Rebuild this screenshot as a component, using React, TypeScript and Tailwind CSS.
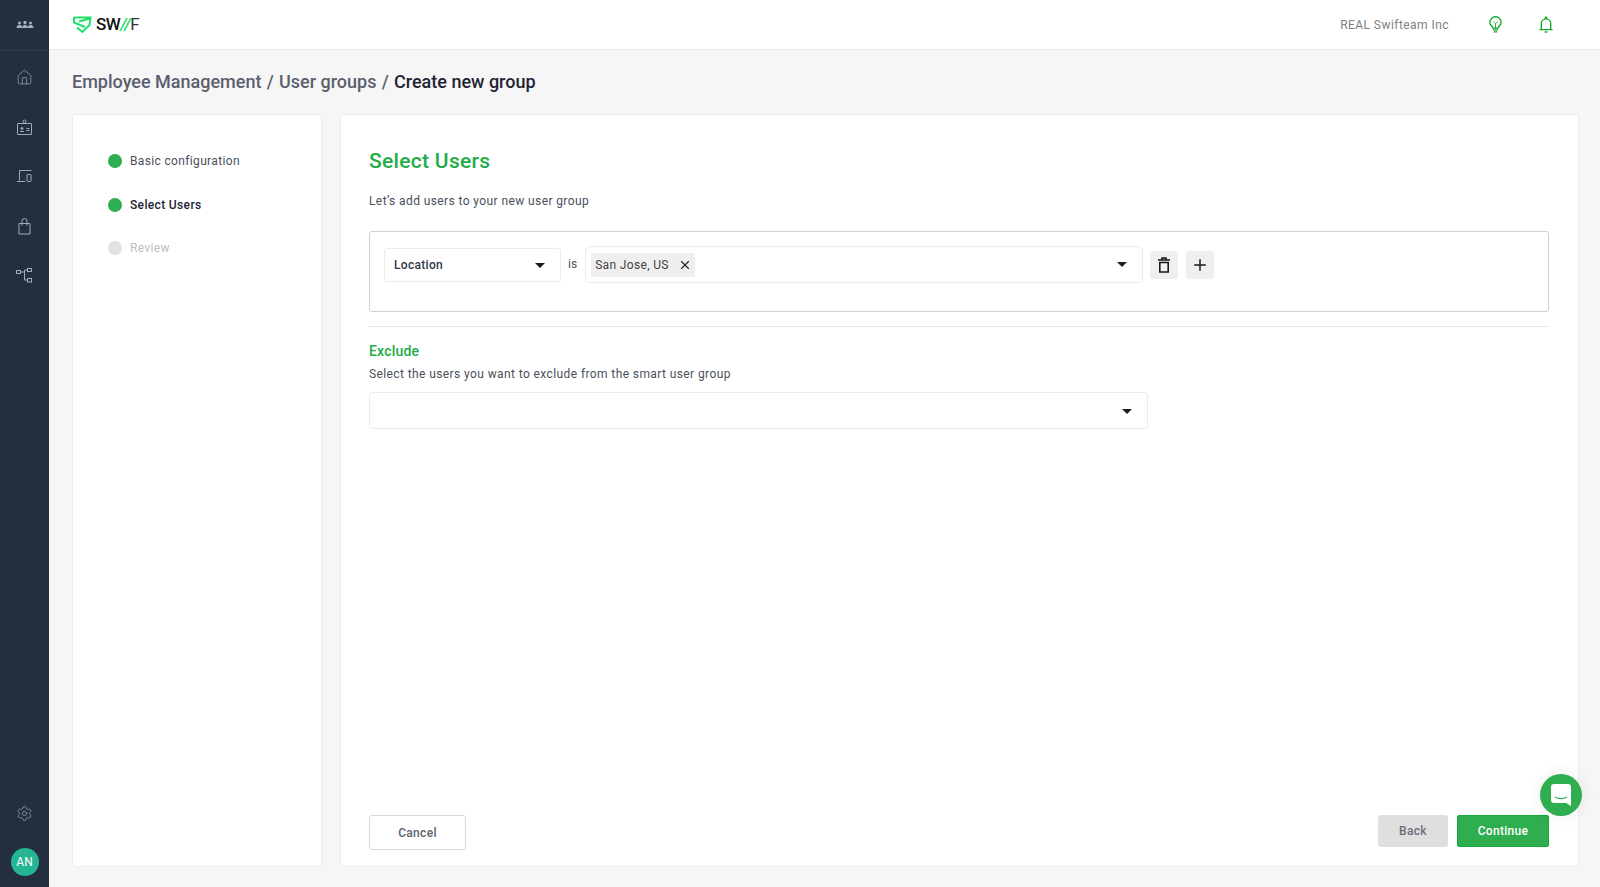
import { Plus, Settings, Home, X } from "lucide-react";

function Caret({ className = "" }: { className?: string }) {
  return <span className={`w-0 h-0 border-x-[5px] border-x-transparent border-t-[5px] border-t-[#1c1c1c] ${className}`} />;
}

function TeamIcon() {
  return (
    <svg width="20" height="20" viewBox="0 0 20 20" fill="#aab0b8">
      <circle cx="4.500" cy="8" r="1.500" />
      <circle cx="10" cy="7.500" r="1.700" />
      <circle cx="15.500" cy="8" r="1.500" />
      <path d="M1.500 13c0-2 1-3 3-3s3 1 3 3zM7.500 13c0-2.200 1-3.300 2.500-3.300s2.500 1.100 2.500 3.300zM12.500 13c0-2 1-3 3-3s3 1 3 3z" />
    </svg>
  );
}

function BadgeIcon() {
  return (
    <svg width="17" height="17" viewBox="0 0 17 17" fill="none" stroke="#a4aab2" strokeWidth="1">
      <rect x="1.500" y="4.500" width="14" height="11" rx="0.500" />
      <circle cx="8.500" cy="2.500" r="1.500" />
      <path d="M4 12.500h4M10.500 9.500h3M10.500 11.500h3" />
      <circle cx="6" cy="9.500" r="1" fill="#a4aab2" />
    </svg>
  );
}

function DevicesIcon() {
  return (
    <svg width="17" height="17" viewBox="0 0 17 17" fill="none" stroke="#a4aab2" strokeWidth="1">
      <path d="M3.500 12.500V2.500h12M1 13.500h8" />
      <rect x="11" y="6.500" width="4" height="7" rx="0.500" />
    </svg>
  );
}

function BagIcon() {
  return (
    <svg width="17" height="17" viewBox="0 0 17 17" fill="none" stroke="#a4aab2" strokeWidth="1">
      <path d="M3 5.500h11v10.500H3z" />
      <path d="M6 7.500V3a2.500 2.500 0 0 1 5 0v4.500" />
    </svg>
  );
}

function TreeIcon() {
  return (
    <svg width="17" height="17" viewBox="0 0 17 17" fill="none" stroke="#a4aab2" strokeWidth="1">
      <rect x="0.500" y="3.500" width="4" height="3" />
      <rect x="11.500" y="1.500" width="4" height="3" />
      <rect x="11.500" y="11.500" width="4" height="3.500" />
      <path d="M4.500 5h4M8.500 3h3M8.500 3v10h3" />
    </svg>
  );
}

function BulbIcon() {
  return (
    <svg width="13" height="18" viewBox="0 0 15 20" fill="none" stroke="#12a82f" strokeWidth="1.500" className="ml-[40px]">
      <path d="M4.500 13.500c0-2-3.500-3-3.500-6.500a6.500 6.500 0 0 1 13 0c0 3.500-3.500 4.500-3.500 6.500z" />
      <path d="M5 6l2.500 2.500L10 6M7.500 8.500v5" strokeWidth="1" />
      <path d="M4.500 15.700h6M5.500 18h4" />
    </svg>
  );
}

function BellIcon() {
  return (
    <svg width="14" height="17" viewBox="0 0 15 18" fill="none" stroke="#12a82f" strokeWidth="1.500" className="ml-[37px]">
      <path d="M0.500 14.500h14M2.500 14.500V8a5 5 0 0 1 10 0v6.500" />
      <circle cx="7.500" cy="2" r="0.800" fill="#12a82f" />
      <path d="M6 17h3" />
    </svg>
  );
}

function TrashIcon() {
  return (
    <svg width="14" height="16" viewBox="0 0 14 16" fill="none" stroke="#1a1a1a" strokeWidth="1.600">
      <path d="M1 3h12M5 3V1h4v2" />
      <path d="M2.800 5.500h8.400V15H2.800z" />
    </svg>
  );
}

function Logo() {
  return (
    <div className="flex items-center gap-[4px]">
      <svg width="19" height="18" viewBox="0 0 19 18" fill="none" stroke="#22e06b" strokeWidth="2">
        <path d="M1 1.500h16.500l-1 7.500-7 7-5.500-4.500M1 1v5.500l11 4.500M6 5.500l11-3" />
      </svg>
      <span className="text-[17px] font-medium leading-none text-[#111] tracking-[-0.500px]">
        SW<span className="text-[#22e06b] italic">//</span><span className="font-normal text-[#333]">F</span>
      </span>
    </div>
  );
}

function Step({ label, state }: { label: string; state: "done" | "active" | "todo" }) {
  const text =
    state === "done" ? "text-[#4a4f5c]" : state === "active" ? "text-[#1f2433] font-medium" : "text-[#bdbdbd]";
  return (
    <div className="flex items-center h-[14px] gap-[8px]">
      <span className={`w-[14px] h-[14px] rounded-full ${state === "todo" ? "bg-[#e2e2e2]" : "bg-[#2eae4e]"}`} />
      <span className={`text-[12px] tracking-[0.350px] ${text}`}>{label}</span>
    </div>
  );
}

export default function App() {
  return (
    <div className="flex h-[887px] w-[1600px] overflow-hidden bg-[#f6f6f6] text-[#4a4f5c] font-['Roboto',sans-serif]">
      <aside className="flex flex-col w-[49px] shrink-0 bg-[#232f3e] items-center">
        <div className="flex items-center justify-center w-full h-[51px] border-b border-[#2f3b4a]">
          <TeamIcon />
        </div>
        <div className="flex flex-col items-center gap-[32.500px] pt-[18px]">
          <Home size={17} strokeWidth={1} color="#a4aab2" />
          <BadgeIcon />
          <DevicesIcon />
          <BagIcon />
          <TreeIcon />
        </div>
        <div className="mt-auto flex flex-col items-center gap-[26px] pb-[11px]">
          <Settings size={17} strokeWidth={1} color="#a4aab2" />
          <div className="flex items-center justify-center w-[28px] h-[28px] rounded-full bg-[#26b594] text-white text-[12px]">
            AN
          </div>
        </div>
      </aside>

      <div className="flex flex-col flex-1 min-w-0">
        <header className="flex items-center shrink-0 h-[50px] pl-[24px] pr-[47px] bg-white border-b border-[#e6e6e6]">
          <Logo />
          <span className="ml-auto text-[12px] tracking-[0.450px] text-[#808080]">REAL Swifteam Inc</span>
          <BulbIcon />
          <BellIcon />
        </header>

        <div className="flex-1 pl-[23px] pr-[21px] pb-[20px] flex flex-col min-h-0">
          <div className="flex items-center h-[64px] pb-[2px] shrink-0 text-[18px] gap-[5.250px] text-[#5b5f6d] font-medium">
            <span>Employee Management</span>
            <span>/</span>
            <span>User groups</span>
            <span>/</span>
            <span className="text-[#1f2433]">Create new group</span>
          </div>

          <div className="flex flex-1 gap-[18px] min-h-0">
            <nav className="flex flex-col gap-[29.500px] w-[250px] shrink-0 pt-[39px] pl-[35px] bg-white rounded-[3px] border border-[#ececec]">
              <Step label="Basic configuration" state="done" />
              <Step label="Select Users" state="active" />
              <Step label="Review" state="todo" />
            </nav>

            <main className="relative flex flex-col flex-1 min-w-0 pt-[31px] pl-[28px] pr-[29px] pb-[16px] bg-white rounded-[3px] border border-[#ececec]">
              <h1 className="text-[21px] leading-[30px] font-medium tracking-[0.300px] text-[#22ac47]">Select Users</h1>
              <p className="mt-[17px] text-[12px] leading-[16px] tracking-[0.400px] text-[#4a4f5c]">
                Let’s add users to your new user group
              </p>

              <div className="flex items-start mt-[22px] h-[81px] pt-[14px] pl-[14px] border border-[#cfcfd6] rounded-[3px]">
                <div className="flex items-center justify-between w-[177px] h-[34px] mt-[2px] pl-[9px] pr-[15px] border border-[#ececec] rounded-[3px]">
                  <span className="text-[12px] tracking-[0.300px] font-medium text-[#30384a]">Location</span>
                  <Caret />
                </div>
                <span className="ml-[7px] mt-[11px] text-[12px] leading-[14px] text-[#555]">is</span>
                <div className="flex items-center ml-[8px] w-[558px] h-[37px] pl-[5px] pr-[15px] border border-[#ececec] rounded-[4px]">
                  <span className="flex items-center gap-[9px] w-[104px] h-[24px] pl-[4px] bg-[#efefef] rounded-[2px] text-[12px] tracking-[0.350px] text-[#444]">
                    San Jose, US
                    <X size={14} strokeWidth={2} color="#222" />
                  </span>
                  <Caret className="ml-auto" />
                </div>
                <button className="flex items-center justify-center w-[28px] h-[28px] ml-[7px] mt-[5px] bg-[#efefef] rounded-[3px]">
                  <TrashIcon />
                </button>
                <button className="flex items-center justify-center w-[28px] h-[28px] mt-[5px] ml-[8px] bg-[#efefef] rounded-[3px]">
                  <Plus size={18} strokeWidth={2} color="#1a1a1a" />
                </button>
              </div>

              <div className="mt-[14px] border-t border-[#e6e6ea]" />

              <h2 className="mt-[15px] text-[14px] leading-[18px] font-medium tracking-[0.200px] text-[#22ac47]">Exclude</h2>
              <p className="mt-[6px] text-[12px] leading-[16px] tracking-[0.400px] text-[#4a4f5c]">
                Select the users you want to exclude from the smart user group
              </p>
              <div className="flex items-center justify-end w-[779px] h-[37px] mt-[10px] pt-[1px] pr-[15px] border border-[#ececec] rounded-[3px]">
                <Caret />
              </div>

              <div className="flex items-end mt-auto">
                <button className="w-[97px] h-[35px] bg-white border border-[#d9d9d9] rounded-[3px] text-[12px] font-medium tracking-[0.300px] text-[#5b5f6d]">
                  Cancel
                </button>
                <button className="ml-auto w-[70px] h-[32px] mb-[3px] bg-[#dfdfdf] rounded-[3px] text-[12px] font-medium tracking-[0.300px] text-[#6b6f7a]">
                  Back
                </button>
                <button className="ml-[9px] w-[92px] h-[32px] mb-[3px] bg-[#2eae4e] border border-[#16a83a] rounded-[2px] text-[12px] font-medium tracking-[0.300px] text-white">
                  Continue
                </button>
              </div>

              <button className="absolute right-[-4px] bottom-[50px] flex items-center justify-center w-[42px] h-[42px] rounded-full bg-[#2eae4e] shadow-[0_0_16px_rgba(0,0,0,0.08)]">
                <svg width="20" height="22" viewBox="0 0 20 22" fill="white">
                  <path d="M3 0h14a3 3 0 0 1 3 3v19l-5-3H3a3 3 0 0 1-3-3V3a3 3 0 0 1 3-3z" />
                  <path d="M4 13c3.500 2 8.500 2 12 0" fill="none" stroke="#2eae4e" strokeWidth="1.200" />
                </svg>
              </button>
            </main>
          </div>
        </div>
      </div>
    </div>
  );
}
